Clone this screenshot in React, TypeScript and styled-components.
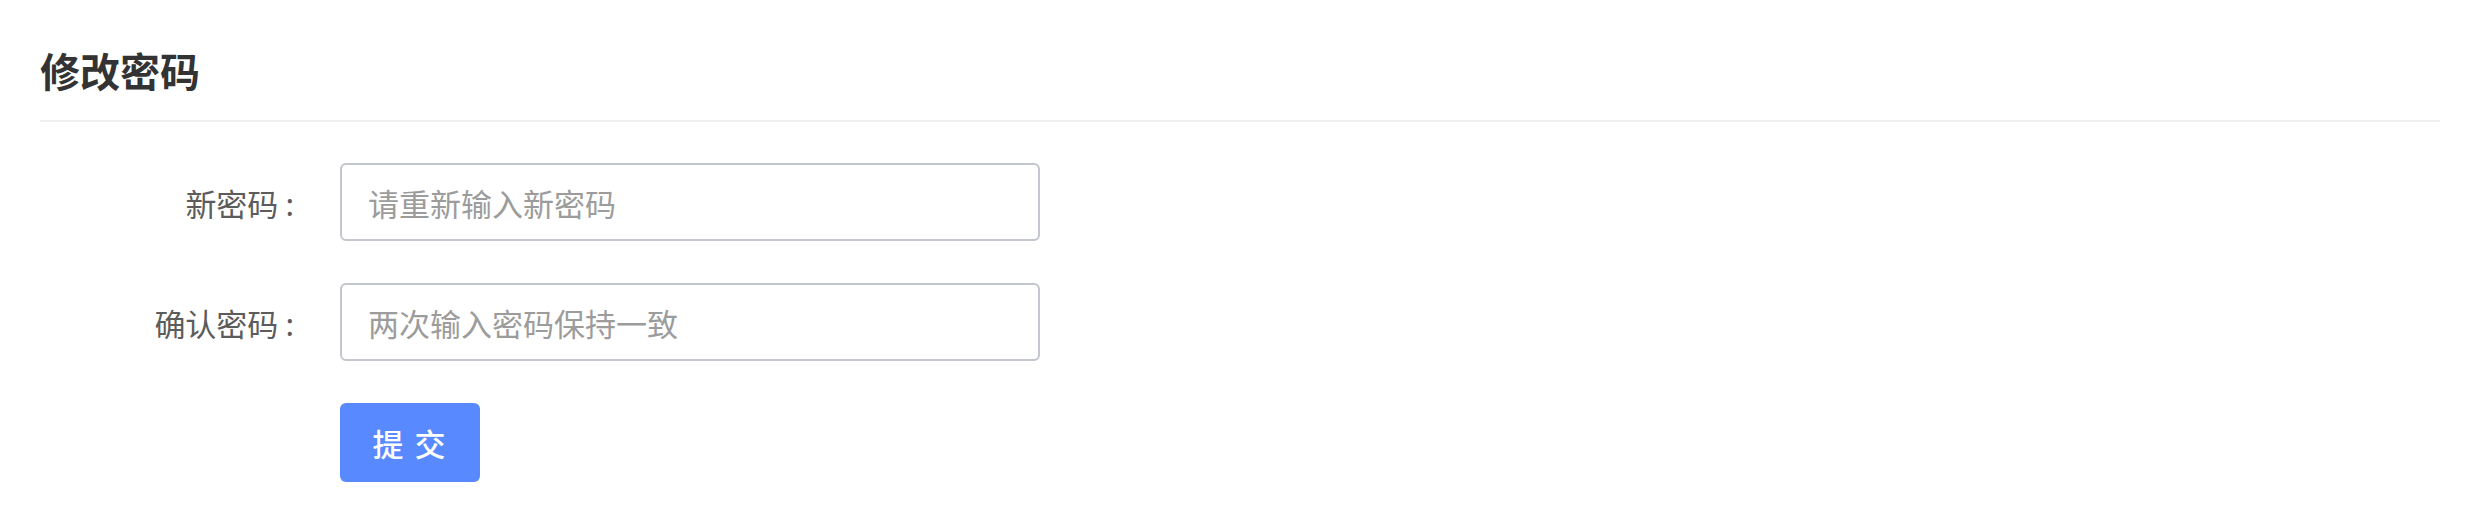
import React from "react";
import { createGlobalStyle, styled } from "styled-components";

const GlobalStyle = createGlobalStyle`
  body {
    margin: 0;
    background: #ffffff;
    font-family: "Noto Sans CJK SC", "Noto Sans", sans-serif;
  }
`;

const Page = styled.div`
  padding: 0 40px;
`;

const Header = styled.div`
  padding: 50px 0 30px;
  border-bottom: 2px solid #efefef;
`;

const Title = styled.h2`
  margin: 0;
  font-size: 40px;
  line-height: 40px;
  font-weight: 700;
  color: #333333;
`;

const Form = styled.form`
  display: flex;
  flex-direction: column;
  gap: 42px;
  padding-top: 41px;
`;

const Row = styled.div`
  display: flex;
  align-items: center;
`;

const Label = styled.label`
  width: 300px;
  box-sizing: border-box;
  padding-right: 46px;
  text-align: right;
  font-size: 31px;
  color: #5c5c5c;
`;

const Colon = styled.span`
  margin-left: 7px;
`;

const Input = styled.input`
  width: 700px;
  height: 78px;
  box-sizing: border-box;
  padding: 0 26px;
  border: 2px solid #c4c6ce;
  border-radius: 6px;
  font-family: inherit;
  font-size: 31px;
  color: #333333;
  outline: none;

  &::placeholder {
    color: #9c9c9c;
  }
`;

const Button = styled.button`
  margin-left: 300px;
  width: 140px;
  height: 79px;
  border: none;
  border-radius: 6px;
  background: #5889ff;
  color: #ffffff;
  font-family: inherit;
  font-size: 31px;
  font-weight: 500;
  letter-spacing: 2px;
  cursor: pointer;
`;

interface FieldProps {
  label: string;
  placeholder: string;
}

function Field({ label, placeholder }: FieldProps) {
  return (
    <Row>
      <Label>
        {label}
        <Colon>:</Colon>
      </Label>
      <Input type="password" placeholder={placeholder} />
    </Row>
  );
}

export default function App() {
  return (
    <Page>
      <GlobalStyle />
      <Header>
        <Title>修改密码</Title>
      </Header>
      <Form onSubmit={(e) => e.preventDefault()}>
        <Field label="新密码" placeholder="请重新输入新密码" />
        <Field label="确认密码" placeholder="两次输入密码保持一致" />
        <Row>
          <Button type="submit">提 交</Button>
        </Row>
      </Form>
    </Page>
  );
}
